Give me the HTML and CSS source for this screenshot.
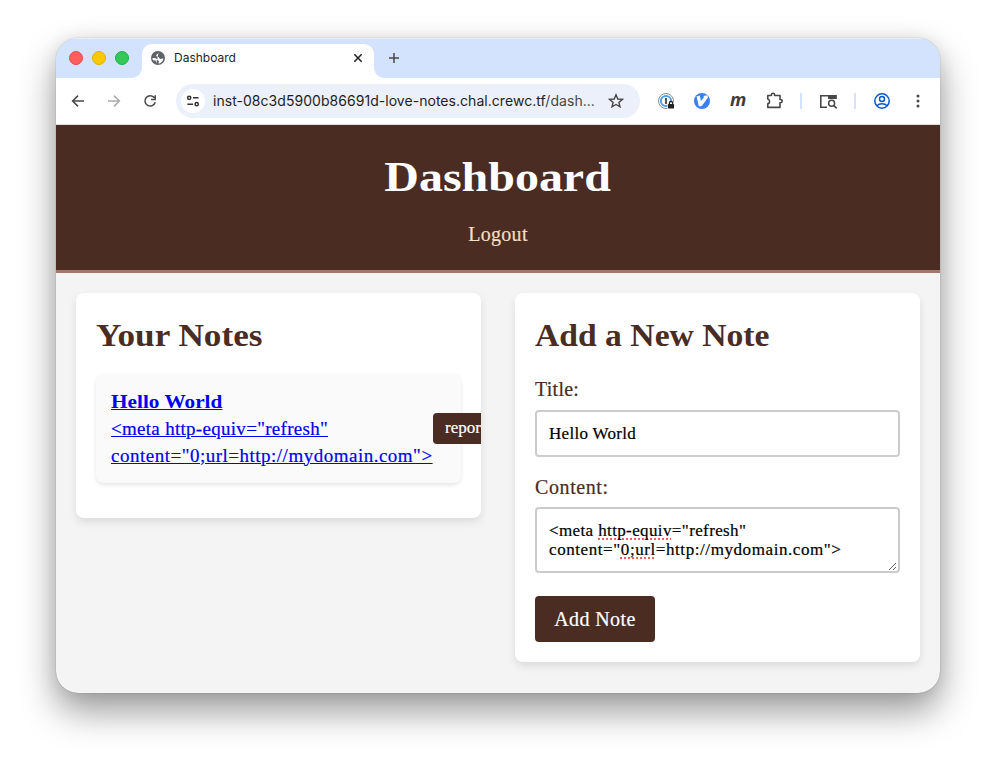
FILE: index.html
```html
<!DOCTYPE html>
<html lang="en">
<head>
<meta charset="utf-8">
<title>Dashboard</title>
<link rel="stylesheet" href="styles.css">
</head>
<body>
<div class="window">
  <div class="tabstrip">
    <div class="lights"><i class="red"></i><i class="yellow"></i><i class="green"></i></div>
    <div class="tab">
      <svg class="globe" width="14" height="14" viewBox="0 0 14 14"><circle cx="7" cy="7" r="7" fill="#5f6368"/><path d="M7.6 1.6C6.8 2.4 6.9 3.2 6 3.5 5 3.8 4.9 5 5.8 5.6 6.8 6 8 5.9 8.3 7 8.5 7.9 9.5 8.2 10.4 7.8 11 7.3 11.7 7.3 12.5 7.5 12 10 10.5 11.8 8.3 12.5L7.4 12.6C7.4 11.5 8.2 11 8 10.3 7.8 9.6 6.4 9.8 6.2 8.8 6 7.6 4.8 7 1.4 7 1.5 7.8 1.7 8.6 2 9.3L4.5 9.4C5 10.5 5 11.2 5.3 12.3" fill="#fff"/></svg>
      <span class="tab-title">Dashboard</span>
      <svg class="close" width="10" height="10" viewBox="0 0 10 10"><path d="M1.3 1.3 8.7 8.7M8.7 1.3 1.3 8.7" stroke="#1f1f1f" stroke-width="1.5"/></svg>
    </div>
    <svg class="plus" width="12" height="12" viewBox="0 0 12 12"><path d="M6 1V11M1 6H11" stroke="#474747" stroke-width="1.5"/></svg>
  </div>
  <div class="toolbar">
    <svg class="nav-icons" width="94" height="20" viewBox="0 0 94 20" fill="none" stroke="#474747" stroke-width="1.5"><path d="M18 10H7M12 4.6 6.6 10 12 15.4"/><path d="M42 10H53M48 4.6 53.4 10 48 15.4" stroke="#ababab"/><path d="M88.4 6.8A5.2 5.2 0 1 0 89.2 11.2M89.2 4.3V8.4H85"/></svg>
    <div class="address">
      <span class="site"><svg width="14" height="12" viewBox="0 0 14 12" fill="none" stroke="#303030" stroke-width="1.5"><circle cx="3.2" cy="2.8" r="1.6"/><path d="M7 2.8H12.5M1.4 9.2H7"/><circle cx="10.7" cy="9.2" r="1.6"/></svg></span>
      <span class="url">inst-08c3d5900b86691d-love-notes.chal.crewc.tf<em>/dash...</em></span>
      <svg class="star" width="16" height="16" viewBox="0 0 16 16"><path d="M8 1.8 9.8 6 14.4 6.4 10.9 9.4 12 13.9 8 11.5 4 13.9 5.1 9.4 1.6 6.4 6.2 6Z" fill="none" stroke="#474747" stroke-width="1.4"/></svg>
    </div>
    <svg class="extensions" width="272" height="24" viewBox="0 0 272 24" fill="none">
      <circle cx="10" cy="12" r="7.5" stroke="#8b8b8b"/><circle cx="10" cy="12" r="5.1" stroke="#48a1f7" stroke-width="2"/><path d="M10 9V15" stroke="#555" stroke-width="2"/><path d="M11.5 13.5H19V20.5H11.5Z" fill="#fff"/><rect x="12" y="15" width="6" height="4.6" rx=".6" fill="#222"/><path d="M13.4 15.5V14a1.6 1.6 0 0 1 3.2 0V15.5" stroke="#222" stroke-width="1.2"/>
      <circle cx="46" cy="12" r="8" fill="#397ff2"/><path d="M40.6 7.4 43.8 6.4 44.9 12 48.2 8 47.2 7 51.4 6.2 52 8.4 45.6 17.3H42.8Z" fill="#fff"/>
      <text x="74" y="17" class="m-icon">m</text>
      <path d="M111.8 6.5H115.4V5.8a1.6 1.6 0 0 1 3.2 0V6.5H124V10.5H124.6a1.6 1.6 0 0 1 0 3.2H124V18.4H111.8V14.8a2.5 2.5 0 0 0 0-4.8Z" stroke="#474747" stroke-width="1.6" stroke-linejoin="round"/>
      <path d="M145 4V20M199 4V20" stroke="#d3e3fd" stroke-width="2"/>
      <path d="M171 18.2H164.8V6.8H179.8V10" stroke="#474747" stroke-width="1.6"/><path d="M172 6H180.6V10H172Z" fill="#474747"/><circle cx="175.6" cy="14.3" r="3" stroke="#474747" stroke-width="1.5"/><path d="M177.8 16.5 180.7 19.4" stroke="#474747" stroke-width="1.6"/>
      <g stroke="#0b57d0" stroke-width="1.5"><circle cx="226" cy="12" r="7.2"/><circle cx="226" cy="10" r="2.5"/><path d="M220.8 16.8C223.5 14 228.5 14 231.2 16.8"/></g>
      <g fill="#474747"><circle cx="262" cy="7" r="1.5"/><circle cx="262" cy="12" r="1.5"/><circle cx="262" cy="17" r="1.5"/></g>
    </svg>
  </div>
  <header>
    <h1>Dashboard</h1>
    <a class="logout">Logout</a>
  </header>
  <main>
    <section class="card notes">
      <h2 class="h-notes">Your Notes</h2>
      <div class="note">
        <div class="note-link"><b>Hello World</b><span class="l1">&lt;meta http-equiv="refresh"</span><span class="l2">content="0;url=http://mydomain.com"&gt;</span></div>
        <button class="report">report</button>
      </div>
    </section>
    <section class="card add">
      <h2 class="h-add">Add a New Note</h2>
      <label class="lb-title">Title:</label>
      <div class="field">Hello World</div>
      <label class="lb-content">Content:</label>
      <div class="field area"><div class="a1">&lt;meta <u>http-equiv</u>="refresh"</div><div class="a2">content="<u>0;url</u>=http://mydomain.com"&gt;</div>
        <svg class="grip" width="9" height="9" viewBox="0 0 9 9"><path d="M1 8 8 1M5 8 8 5" stroke="#555" stroke-width=".9"/></svg></div>
      <button class="submit">Add Note</button>
    </section>
  </main>
</div>
</body>
</html>
```
FILE: styles.css
```css
* { box-sizing: border-box; }
html { height: 767px; background: #fff; }
body { margin: 0; height: 767px; padding: 38px 56px; font-family: "Liberation Serif", serif; }
.window { width: 884px; height: 655px; border-radius: 22px; overflow: hidden; background: #f4f4f4; box-shadow: 0 0 1px rgba(0,0,0,.45), 0 18px 36px rgba(0,0,0,.4), 0 0 18px rgba(0,0,0,.08); }
.tabstrip { height: 40px; background: #d3e3fd; display: flex; align-items: flex-start; box-shadow: inset 0 1px #e4eefe; }
.lights { display: flex; gap: 9px; padding: 13px 0 0 13px; width: 86px; }
.lights i { width: 14px; height: 14px; border-radius: 50%; border: 1px solid; }
.lights .red { background: #ff5f5c; border-color: #e54a48; }
.lights .yellow { background: #fac800; border-color: #deb000; }
.lights .green { background: #34c759; border-color: #20ae45; }
.tab { position: relative; width: 232px; height: 34px; margin-top: 6px; background: #fff; border-radius: 10px 10px 0 0; display: flex; align-items: center; padding: 0 11px 6px 9px; }
.tab::before, .tab::after { content: ""; position: absolute; bottom: 0; width: 10px; height: 10px; }
.tab::before { left: -10px; background: radial-gradient(circle at 0 0, transparent 9.5px, #fff 10px); }
.tab::after { right: -10px; background: radial-gradient(circle at 100% 0, transparent 9.5px, #fff 10px); }
.tab-title { font: 12px/14px Inter, sans-serif; color: #1f1f1f; margin-left: 9px; flex: 1; }
.plus { margin: 14px 0 0 14px; }
.toolbar { height: 47px; background: linear-gradient(#fff, #fff); border-bottom: 1px solid #dfdfdf; display: flex; align-items: center; padding-left: 10px; }
.nav-icons { margin-right: 16px; }
.address { width: 464px; height: 34px; border-radius: 17px; background: #ecf0fa; display: flex; align-items: center; padding-left: 5px; }
.site { width: 24px; height: 24px; border-radius: 50%; background: #fff; display: flex; align-items: center; justify-content: center; }
.url { font: 14px/18px Inter, sans-serif; letter-spacing: .04px; color: #1f1f1f; margin-left: 8px; width: 395px; white-space: nowrap; }
.url em { font-style: normal; color: #474747; }
.extensions { margin-left: 16px; overflow: visible; }
.m-icon { font: italic bold 18px "Open Sans", sans-serif; fill: #3c3c3c; }
header { height: 148px; background: #4a2c23; border-bottom: 3px solid #a1796a; display: flex; flex-direction: column; align-items: center; padding-top: 26px; }
h1, h2 { margin: 0; }
h1 { font-size: 43px; line-height: 52px; transform: scaleX(1.115); color: #fff; }
.logout { font-size: 20px; line-height: 24px; letter-spacing: .3px; margin-top: 19px; color: #f3dfc1; -webkit-text-stroke: .2px #f3dfc1; }
main { display: flex; justify-content: space-between; align-items: flex-start; padding: 20px; }
.card { width: 405px; background: #fff; border-radius: 8px; padding: 20px; overflow: hidden; box-shadow: 0 4px 8px rgba(0,0,0,.1); }
.notes { height: 225px; }
.add { height: 369px; }
h2 { width: max-content; font-size: 31px; line-height: 46px; color: #4a2c23; white-space: nowrap; transform-origin: 0 50%; }
.h-notes { transform: scaleX(1.135); }
.h-add { transform: scaleX(1.085); }
.note { height: 109px; margin-top: 15px; padding: 0 15px 1px; background: #fafafa; border-radius: 8px; box-shadow: 0 2px 4px rgba(0,0,0,.1); display: flex; align-items: center; }
.note-link { width: 322px; flex: none; font-size: 19px; line-height: 27px; color: #0000ee; white-space: nowrap; }
.note-link b, .note-link span { display: table; text-decoration: underline; }
.note-link b { transform: scaleX(1.12); transform-origin: 0 50%; }
.note-link span { -webkit-text-stroke: .2px #0000ee; }
.l1 { letter-spacing: .29px; }
.l2 { letter-spacing: .5px; }
button { border: 0; background: #4a2c23; color: #fff; font-family: inherit; border-radius: 4px; -webkit-text-stroke: .2px #fff; }
.report { flex: none; height: 31px; width: 66px; padding: 0 0 1px 12px; font-size: 17px; text-align: left; }
label { display: block; font-size: 20px; line-height: 26px; color: #4a2c23; -webkit-text-stroke: .2px #4a2c23; }
.lb-title { margin: 17px 0 8px; letter-spacing: .25px; }
.lb-content { margin: 17px 0 7px; letter-spacing: .6px; }
.field { height: 47px; border: 2px solid #ccc; border-radius: 4px; padding: 12px; font-size: 17px; line-height: 19px; color: #000; letter-spacing: .3px; -webkit-text-stroke: .2px #000; }
.area { height: 66px; position: relative; white-space: nowrap; }
.a1 { letter-spacing: .38px; }
.a2 { letter-spacing: .58px; }
.area u { text-decoration: underline dotted #f0605c 2px; text-underline-offset: 2px; text-decoration-skip-ink: none; }
.grip { position: absolute; right: 1px; bottom: 0; }
.submit { display: block; width: 120px; height: 46px; margin-top: 23px; padding: 0; font-size: 20px; letter-spacing: .4px; }
```
